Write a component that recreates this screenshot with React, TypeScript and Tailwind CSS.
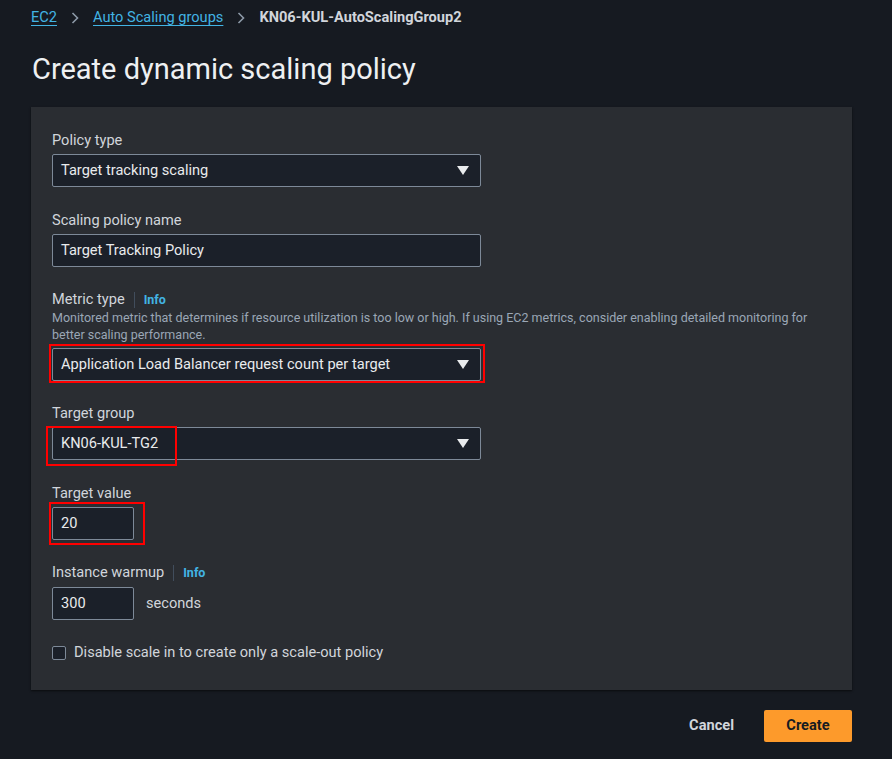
import React from 'react';

const font = { fontFamily: 'Roboto, "Open Sans", sans-serif' };

const Caret = () => (
  <svg width="12" height="10" viewBox="0 0 12 10" className="shrink-0">
    <path d="M0 0 H12 L6 9 Z" fill="#e9ebed" />
  </svg>
);

const Chevron = () => (
  <svg width="10" height="14" viewBox="0 0 10 14" className="mx-[13px]">
    <path d="M2.5 2 L7.5 7 L2.5 12" fill="none" stroke="#8d99a8" strokeWidth="1.6" />
  </svg>
);

const Label = ({ children, info }: { children: React.ReactNode; info?: boolean }) => (
  <div className="flex items-center h-[18px] text-[14.6px] text-[#d1d5db]">
    <span>{children}</span>
    {info && (
      <>
        <span className="mx-[9px] h-[16px] w-px bg-[#414d5c]" />
        <span className="text-[12.5px] font-bold text-[#42b4e4]">Info</span>
      </>
    )}
  </div>
);

const SelectBox = ({ value }: { value: string }) => (
  <div className="flex items-center justify-between w-[429px] h-[33px] pl-[8px] pr-[11px] pt-px bg-[#1b2029] border border-[#7d8998] rounded-[2px] text-[14.6px] text-[#e9ebed]">
    <span>{value}</span>
    <Caret />
  </div>
);

const TextBox = ({ value, w }: { value: string; w: string }) => (
  <div className={`flex items-center ${w} h-[33px] pl-[8px] pt-px bg-[#1b2029] border border-[#7d8998] rounded-[2px] text-[14.6px] text-[#e9ebed]`}>
    {value}
  </div>
);

const Highlight = ({ className }: { className: string }) => (
  <div className={`absolute border-2 border-[#ff0000] pointer-events-none ${className}`} />
);

export default function App() {
  return (
    <div className="w-[892px] h-[759px] bg-[#161a21] overflow-hidden" style={font}>
      <div className="pl-[31px] pr-[40px]">
        {/* breadcrumbs */}
        <div className="flex items-center h-[18px] mt-[9px] text-[14.6px]">
          <span className="text-[#42b4e4] underline underline-offset-[3px]">EC2</span>
          <Chevron />
          <span className="text-[#42b4e4] underline underline-offset-[3px]">Auto Scaling groups</span>
          <Chevron />
          <span className="font-bold text-[#d1d5db]">KN06-KUL-AutoScalingGroup2</span>
        </div>

        <h1 className="mt-[24px] ml-px text-[29px] leading-[36px] text-[#eef0f2]">Create dynamic scaling policy</h1>

        {/* panel */}
        <div className="relative mt-[20px] w-[821px] h-[583px] bg-[#2a2d32] shadow-[0_1px_2px_rgba(0,0,0,0.6)] px-[21px] pt-[25px]">
          <Label>Policy type</Label>
          <div className="mt-[4px]"><SelectBox value="Target tracking scaling" /></div>

          <div className="mt-[25px]"><Label>Scaling policy name</Label></div>
          <div className="mt-[4px]"><TextBox value="Target Tracking Policy" w="w-[429px]" /></div>

          <div className="mt-[24px]"><Label info>Metric type</Label></div>
          <div className="text-[12.5px] leading-[17px] text-[#9ba7b6] pr-[20px]">
            Monitored metric that determines if resource utilization is too low or high. If using EC2 metrics, consider enabling detailed monitoring for better scaling performance.
          </div>
          <div className="mt-[5px]"><SelectBox value="Application Load Balancer request count per target" /></div>

          <div className="mt-[24px]"><Label>Target group</Label></div>
          <div className="mt-[4px]"><SelectBox value="KN06-KUL-TG2" /></div>

          <div className="mt-[25px]"><Label>Target value</Label></div>
          <div className="mt-[4px]"><TextBox value="20" w="w-[82px]" /></div>

          <div className="mt-[24px]"><Label info>Instance warmup</Label></div>
          <div className="mt-[5px] flex items-center gap-[12px]">
            <TextBox value="300" w="w-[82px]" />
            <span className="text-[14.6px] text-[#d1d5db]">seconds</span>
          </div>

          <div className="mt-[22px] flex items-center gap-[8px]">
            <div className="w-[14px] h-[14px] border border-[#7d8998] rounded-[2px] bg-[#1b2029]" />
            <span className="text-[14.6px] text-[#d1d5db]">Disable scale in to create only a scale-out policy</span>
          </div>

          {/* annotation boxes */}
          <Highlight className="left-[18px] top-[237px] w-[436px] h-[39px]" />
          <Highlight className="left-[15px] top-[319px] w-[131px] h-[40px]" />
          <Highlight className="left-[18px] top-[395px] w-[96px] h-[43px]" />
        </div>

        {/* footer */}
        <div className="mt-[20px] w-[821px] flex justify-end items-center">
          <span className="mr-[30px] text-[14.6px] font-bold text-[#d1d5db]">Cancel</span>
          <div className="flex items-center justify-center w-[88px] h-[32px] bg-[#fd9a2b] rounded-[2px] text-[14.6px] font-bold text-[#161a21]">
            Create
          </div>
        </div>
      </div>
    </div>
  );
}
